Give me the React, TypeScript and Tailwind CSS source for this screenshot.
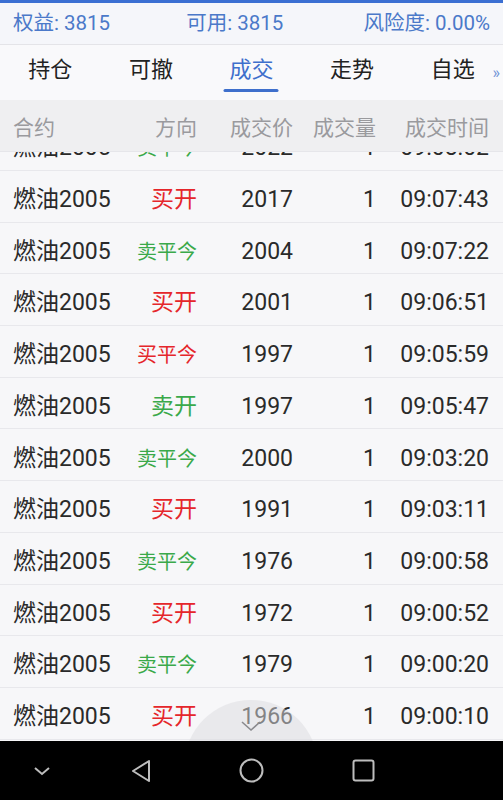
import React from 'react';

type Trade = { dir: string; price: string; qty: string; time: string };

const trades: Trade[] = [
  { dir: '卖平今', price: '2022', qty: '1', time: '09:08:02' },
  { dir: '买开', price: '2017', qty: '1', time: '09:07:43' },
  { dir: '卖平今', price: '2004', qty: '1', time: '09:07:22' },
  { dir: '买开', price: '2001', qty: '1', time: '09:06:51' },
  { dir: '买平今', price: '1997', qty: '1', time: '09:05:59' },
  { dir: '卖开', price: '1997', qty: '1', time: '09:05:47' },
  { dir: '卖平今', price: '2000', qty: '1', time: '09:03:20' },
  { dir: '买开', price: '1991', qty: '1', time: '09:03:11' },
  { dir: '卖平今', price: '1976', qty: '1', time: '09:00:58' },
  { dir: '买开', price: '1972', qty: '1', time: '09:00:52' },
  { dir: '卖平今', price: '1979', qty: '1', time: '09:00:20' },
  { dir: '买开', price: '1966', qty: '1', time: '09:00:10' },
];

const tabs = ['持仓', '可撤', '成交', '走势', '自选'];

function DirCell({ dir }: { dir: string }) {
  const buy = dir.startsWith('买');
  const small = dir.length > 2;
  return (
    <span className={`${buy ? 'text-[#e5262b]' : 'text-[#3aa94a]'} ${small ? 'text-[20px]' : 'text-[23px]'}`}>
      {dir}
    </span>
  );
}

export default function App() {
  return (
    <div
      className="relative flex h-[800px] w-[503px] flex-col overflow-hidden bg-[#f7f7f9]"
      style={{ fontFamily: 'Roboto, "Noto Sans CJK SC", sans-serif' }}
    >
      <div className="h-[3px] bg-[#3b6fd2]" />

      {/* account summary */}
      <div className="flex h-[42px] items-center justify-between border-b border-[#e4e4e8] bg-[#f5f6fa] pl-[13px] pr-[13px] text-[20.5px] text-[#4b79c9]">
        <span>权益: 3815</span>
        <span className="mr-[4px]">可用: 3815</span>
        <span>风险度:&nbsp;0.00%</span>
      </div>

      {/* tabs */}
      <div className="relative flex h-[55px] bg-[#f9f9fb]">
        {tabs.map((t) => {
          const active = t === '成交';
          return (
            <div key={t} className="relative flex flex-1 justify-center pt-[8px]">
              <span className={`text-[22px] ${active ? 'text-[#3e6fcc]' : 'text-[#222]'}`}>{t}</span>
              {active && <div className="absolute left-1/2 top-[44px] h-[3px] w-[55px] -translate-x-1/2 rounded-full bg-[#3e6fcc]" />}
            </div>
          );
        })}
        <span className="absolute right-[3px] top-[16px] text-[16px] text-[#6f93d6]">»</span>
      </div>

      {/* column header */}
      <div className="relative z-10 flex h-[51px] items-center bg-[#efeff1] pt-[6px] text-[21px] text-[#9a9a9e] shadow-[0_1px_0_#e6e6ea]">
        <span className="w-[100px] pl-[13px]">合约</span>
        <span className="w-[97px] text-right">方向</span>
        <span className="w-[96px] text-right">成交价</span>
        <span className="w-[83px] text-right">成交量</span>
        <span className="w-[113px] text-right">成交时间</span>
      </div>

      {/* trades list */}
      <div className="flex-1 overflow-hidden">
        <div className="-mt-[31.7px]">
          {trades.map((r, i) => (
            <div key={i} className="flex h-[51.7px] items-center border-b border-[#e8e8ec] pt-[8px] text-[23px] text-[#2a2a2a]">
              <span className="w-[114px] whitespace-nowrap pl-[13px]">燃油2005</span>
              <span className="w-[83px] text-right">
                <DirCell dir={r.dir} />
              </span>
              <span className="w-[96px] text-right">{r.price}</span>
              <span className="w-[83px] text-right">{r.qty}</span>
              <span className="w-[113px] text-right">{r.time}</span>
            </div>
          ))}
        </div>
      </div>

      {/* floating pull handle */}
      <div className="absolute left-[184px] top-[700px] flex h-[134px] w-[134px] justify-center rounded-full bg-[#dcdce0]/50 pt-[20px]">
        <svg width="22" height="12" viewBox="0 0 22 12" fill="none" stroke="#8a8a8e" strokeWidth="1.6">
          <path d="M2 2l9 8 9-8" />
        </svg>
      </div>

      {/* system nav */}
      <div className="relative z-10 flex h-[59px] items-center bg-black">
        <div className="flex w-[84px] justify-center">
          <svg width="20" height="12" viewBox="0 0 20 12" fill="none" stroke="#bdbdbd" strokeWidth="2">
            <path d="M3 3l7 6 7-6" />
          </svg>
        </div>
        <div className="ml-[46px] flex w-[22px] justify-center">
          <svg width="22" height="24" viewBox="0 0 22 24" fill="none" stroke="#bdbdbd" strokeWidth="2" strokeLinejoin="round">
            <path d="M19 2L3 12l16 10z" />
          </svg>
        </div>
        <div className="ml-[87px] flex justify-center">
          <svg width="25" height="25" viewBox="0 0 25 25" fill="none" stroke="#bdbdbd" strokeWidth="2">
            <circle cx="12.5" cy="12.5" r="11" />
          </svg>
        </div>
        <div className="ml-[88px] flex justify-center">
          <svg width="23" height="23" viewBox="0 0 23 23" fill="none" stroke="#bdbdbd" strokeWidth="2">
            <rect x="1.5" y="1.5" width="20" height="20" rx="2" />
          </svg>
        </div>
      </div>
    </div>
  );
}
